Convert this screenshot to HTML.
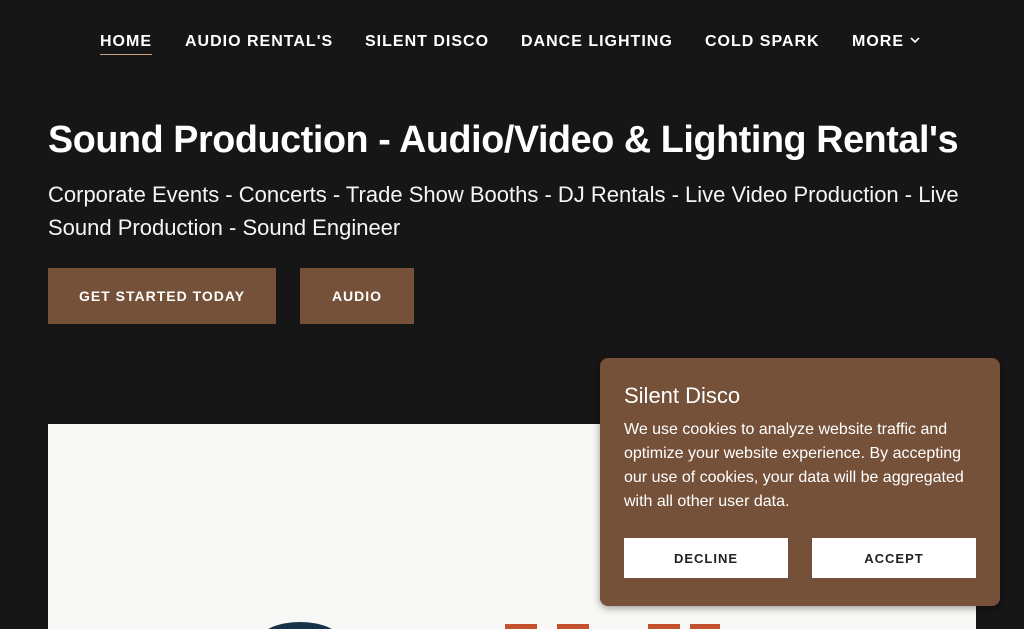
<!DOCTYPE html>
<html><head><meta charset="utf-8"><style>
*{margin:0;padding:0;box-sizing:border-box}
html,body{width:1024px;height:629px;overflow:hidden}
body{background:#161616;font-family:"Liberation Sans",sans-serif;color:#fff;position:relative}
nav{position:absolute;top:33px;left:0;width:1024px;height:20px;font-size:16px;font-weight:bold;letter-spacing:1px}
nav span{position:absolute;top:0;white-space:nowrap}
.u{border-bottom:1px solid #c9a07f;padding-bottom:3px}
h1{position:absolute;left:48px;top:118px;font-size:37.7px;font-weight:bold;white-space:nowrap;letter-spacing:-0.4px}
.sub{position:absolute;left:48px;top:178px;width:950px;font-size:22px;line-height:33px;color:#f5f5f5}
.btn{position:absolute;top:268px;height:56px;background:#76513a;color:#fff;font-size:14px;font-weight:bold;letter-spacing:1px;display:flex;align-items:center;justify-content:center}
.hero{position:absolute;left:48px;top:424px;width:928px;height:205px;background:#f8f8f6;overflow:hidden}
.pop{position:absolute;left:600px;top:358px;width:400px;height:248px;background:#76513a;border-radius:8px;box-shadow:0 2px 8px rgba(0,0,0,.4)}
.pop h3{position:absolute;left:24px;top:25px;font-size:22px;font-weight:normal}
.pop p{position:absolute;left:24px;top:60px;width:360px;font-size:16px;line-height:24px}
.pb{position:absolute;top:180px;width:164px;height:40px;background:#fff;color:#222;font-size:13px;font-weight:bold;letter-spacing:1px;display:flex;align-items:center;justify-content:center}
</style></head><body>
<nav>
<span class="u" style="left:100px">HOME</span>
<span style="left:185px">AUDIO RENTAL'S</span>
<span style="left:365px">SILENT DISCO</span>
<span style="left:521px">DANCE LIGHTING</span>
<span style="left:705px">COLD SPARK</span>
<span style="left:852px">MORE <svg width="12" height="10" viewBox="0 0 12 10" style="vertical-align:1px"><path d="M2 3l4 4 4-4" stroke="#fff" stroke-width="1.6" fill="none"/></svg></span>
</nav>
<h1>Sound Production - Audio/Video &amp; Lighting Rental's</h1>
<div class="sub">Corporate Events - Concerts - Trade Show Booths - DJ Rentals - Live Video Production - Live Sound Production - Sound Engineer</div>
<div class="btn" style="left:48px;width:228px">GET STARTED TODAY</div>
<div class="btn" style="left:300px;width:114px">AUDIO</div>
<div class="hero">
<div style="position:absolute;left:210px;top:198px;width:84px;height:40px;border-radius:50%;background:#17324a"></div>
<div style="position:absolute;left:457px;top:200px;width:32px;height:10px;background:#c4522e"></div>
<div style="position:absolute;left:509px;top:200px;width:32px;height:10px;background:#c4522e"></div>
<div style="position:absolute;left:600px;top:200px;width:32px;height:10px;background:#c4522e"></div>
<div style="position:absolute;left:642px;top:200px;width:30px;height:10px;background:#c4522e"></div>
</div>
<div class="pop">
<h3>Silent Disco</h3>
<p>We use cookies to analyze website traffic and optimize your website experience. By accepting our use of cookies, your data will be aggregated with all other user data.</p>
<div class="pb" style="left:24px">DECLINE</div>
<div class="pb" style="left:212px">ACCEPT</div>
</div>
</body></html>
